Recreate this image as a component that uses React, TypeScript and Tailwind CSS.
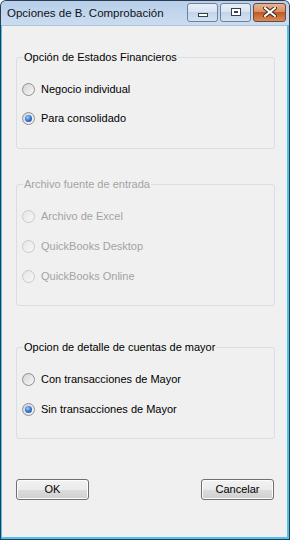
import React from "react";

type RadioProps = {
  label: string;
  checked?: boolean;
  disabled?: boolean;
};

function Radio({ label, checked = false, disabled = false }: RadioProps) {
  return (
    <div className="flex items-center h-[13px]">
      <span
        className={`relative flex items-center justify-center w-[13px] h-[13px] rounded-full border ${
          disabled
            ? "border-[#c9c9c9] bg-gradient-to-br from-[#e6e6e6] to-[#f7f7f7]"
            : "border-[#8e8f8f] bg-gradient-to-br from-[#d4d4d4] to-[#f8f8f8]"
        }`}
      >
        {checked && (
          <span className="w-[7px] h-[7px] rounded-full bg-[radial-gradient(circle_at_40%_35%,#a9d0f7_0%,#3b7bd4_45%,#1a3f8f_100%)]" />
        )}
      </span>
      <span
        className={`ml-[6px] text-[11px] leading-[13px] ${
          disabled ? "text-[#a3a3a3]" : "text-black"
        }`}
      >
        {label}
      </span>
    </div>
  );
}

type GroupProps = {
  title: string;
  disabled?: boolean;
  height: string;
  gap: string;
  children: React.ReactNode;
};

function Group({ title, disabled, height, gap, children }: GroupProps) {
  return (
    <fieldset
      className={`ml-[14px] w-[259px] ${height} border border-[#d5dfe5] rounded-[3px] pl-[5px]`}
    >
      <legend
        className={`ml-[1px] px-[1px] text-[11px] leading-[13px] ${
          disabled ? "text-[#a3a3a3]" : "text-black"
        }`}
      >
        {title}
      </legend>
      <div className={`flex flex-col ${gap} pt-[19px]`}>{children}</div>
    </fieldset>
  );
}

function WinButton({ label }: { label: string }) {
  return (
    <button className="w-[73px] h-[21px] rounded-[3px] border border-[#707070] bg-[linear-gradient(#f2f2f2_0%,#ebebeb_50%,#dddddd_50%,#cfcfcf_100%)] text-[11px] leading-[13px] text-black shadow-[inset_0_0_0_1px_#fcfcfc]">
      {label}
    </button>
  );
}

export default function App() {
  return (
    <div
      className="w-[290px] h-[540px] flex flex-col bg-[#2d3b50] p-[1px] rounded-t-[6px]"
      style={{ fontFamily: '"Liberation Sans", Arial, sans-serif' }}
    >
      <div className="flex-1 flex flex-col rounded-t-[5px] bg-[#4cc2f0] pb-[2px] pr-[2px] pl-[1px]">
        {/* title bar */}
        <div className="h-[24px] -mr-[2px] -ml-[1px] rounded-t-[5px] bg-gradient-to-b from-[#b7cfea] to-[#cbdcf0] flex items-center pl-[6px] pr-[3px]">
          <span className="text-[11.5px] leading-[14px] text-[#111] flex-1">
            Opciones de B. Comprobación
          </span>
          <div className="flex items-start gap-[2px] -mt-[2px]">
            <div className="w-[31px] h-[19px] rounded-[3px] border border-[#6f829a] bg-[linear-gradient(#e7eef8_0%,#d7e3f2_50%,#c3d4ea_50%,#d3e1f2_100%)] flex items-end justify-center pb-[4px]">
              <span className="w-[10px] h-[4px] border border-[#33404f] bg-white" />
            </div>
            <div className="w-[31px] h-[19px] rounded-[3px] border border-[#6f829a] bg-[linear-gradient(#e7eef8_0%,#d7e3f2_50%,#c3d4ea_50%,#d3e1f2_100%)] flex items-center justify-center">
              <span className="w-[10px] h-[8px] border border-[#33404f] bg-white flex items-center justify-center">
                <span className="w-[4px] h-[2px] border border-[#33404f]" />
              </span>
            </div>
            <div className="w-[33px] h-[19px] rounded-[3px] border border-[#6b4a3a] bg-[linear-gradient(#e9b590_0%,#d88b5d_50%,#c0582a_50%,#d98b55_100%)] flex items-center justify-center">
              <svg width="14" height="10" viewBox="0 0 14 10">
                <path
                  d="M2 1 L12 9 M12 1 L2 9"
                  stroke="#3a2a22"
                  strokeWidth="4"
                  strokeLinecap="square"
                />
                <path
                  d="M2 1 L12 9 M12 1 L2 9"
                  stroke="#ffffff"
                  strokeWidth="2"
                  strokeLinecap="square"
                />
              </svg>
            </div>
          </div>
        </div>

        {/* client area */}
        <div className="flex-1 bg-[#f0f0f0] border-t border-[#a9c2de] flex flex-col pt-[25px]">
          <Group title="Opción de Estados Financieros" height="h-[98px]" gap="gap-[16px]">
            <Radio label="Negocio individual" />
            <Radio label="Para consolidado" checked />
          </Group>

          <div className="mt-[29px]">
            <Group title="Archivo fuente de entrada" disabled height="h-[128px]" gap="gap-[17px]">
              <Radio label="Archivo de Excel" disabled />
              <Radio label="QuickBooks Desktop" disabled />
              <Radio label="QuickBooks Online" disabled />
            </Group>
          </div>

          <div className="mt-[35px]">
            <Group title="Opcion de detalle de cuentas de mayor" height="h-[98px]" gap="gap-[17px]">
              <Radio label="Con transacciones de Mayor" />
              <Radio label="Sin transacciones de Mayor" checked />
            </Group>
          </div>

          <div className="mt-[40px] ml-[14px] w-[258px] flex justify-between">
            <WinButton label="OK" />
            <WinButton label="Cancelar" />
          </div>
        </div>
      </div>
    </div>
  );
}
